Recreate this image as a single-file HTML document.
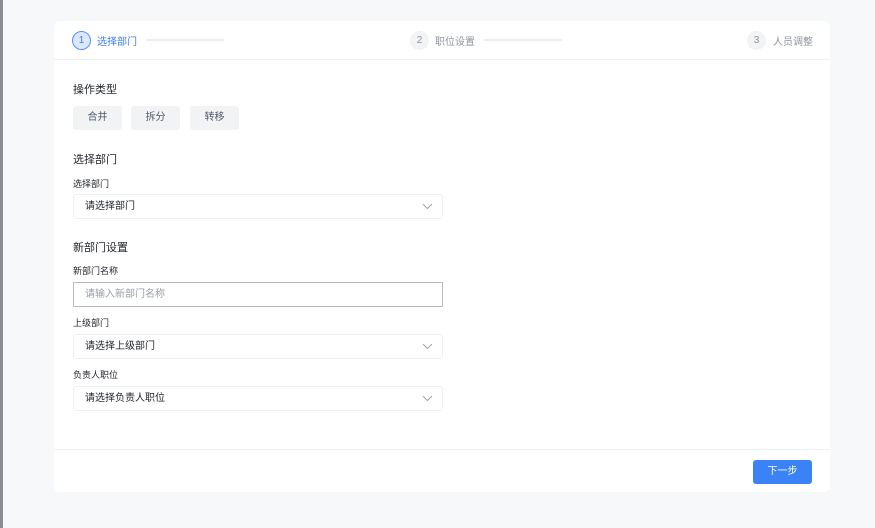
<!DOCTYPE html>
<html><head><meta charset="utf-8"><style>
*{box-sizing:border-box;margin:0;padding:0}
body{width:875px;height:528px;background:#f7f8fa;font-family:"Liberation Sans","Noto Sans CJK SC",sans-serif;position:relative;overflow:hidden;color:#1f2329}
.lstrip{position:absolute;left:0;top:0;width:3px;height:528px;background:#8a8d91}
.card{position:absolute;left:54px;top:21px;width:776px;height:471px;background:#fff;border-radius:6px}
.hdiv{position:absolute;left:0;right:0;top:38px;height:1px;background:#eff0f2}
.fdiv{position:absolute;left:0;right:0;top:428px;height:1px;background:#eff0f2}
.circ{position:absolute;width:19px;height:19px;border-radius:50%;background:#f2f3f5;color:#8f959e;font-size:10px;text-align:center;line-height:19px}
.circ.a{background:#dbe8ff;border:1px solid #5b8ff9;color:#3b7cf5;line-height:17px}
.st{position:absolute;font-size:10px;color:#8f959e;top:12px}
.st.a{color:#3b7cf5}
.ln{position:absolute;height:2px;background:#eceef1;top:18px;width:78px}
.t{position:absolute;font-size:11px;color:#1f2329}
.lb{position:absolute;font-size:9px;color:#1f2329}
.btn{position:absolute;top:85px;height:24px;background:#f2f3f5;border-radius:3px;font-size:10px;color:#4e5969;text-align:center;line-height:24px;width:49px}
.sel{position:absolute;left:19px;width:370px;height:25px;border:1px solid #eef0f2;border-radius:3px;font-size:10px;line-height:23px;padding-left:11px;color:#1f2329}
.sel svg{position:absolute;right:9px;top:8px}
.inp{position:absolute;left:19px;top:261px;width:370px;height:25px;border:1px solid #b8bbbf;font-size:10px;line-height:23px;padding-left:11px;color:#9aa0a8}
.next{position:absolute;left:699px;top:439px;width:59px;height:24px;background:#3b82f6;border-radius:3px;color:#fff;font-size:10px;text-align:center;line-height:24px}
</style></head><body>
<div class="lstrip"></div>
<div class="card">
<div class="circ a" style="left:18px;top:10px">1</div><div class="st a" style="left:43px">选择部门</div><div class="ln" style="left:92px"></div>
<div class="circ" style="left:356px;top:10px">2</div><div class="st" style="left:381px">职位设置</div><div class="ln" style="left:430px"></div>
<div class="circ" style="left:693px;top:10px">3</div><div class="st" style="left:719px">人员调整</div>
<div class="hdiv"></div>
<div class="t" style="left:19px;top:60px">操作类型</div>
<div class="btn" style="left:19px">合并</div><div class="btn" style="left:77px">拆分</div><div class="btn" style="left:136px">转移</div>
<div class="t" style="left:19px;top:130px">选择部门</div>
<div class="lb" style="left:19px;top:156px">选择部门</div>
<div class="sel" style="top:173px">请选择部门<svg width="11" height="7" viewBox="0 0 11 7"><path d="M1 1l4.5 4.5L10 1" fill="none" stroke="#a0a4aa" stroke-width="1"/></svg></div>
<div class="t" style="left:19px;top:218px">新部门设置</div>
<div class="lb" style="left:19px;top:243px">新部门名称</div>
<div class="inp">请输入新部门名称</div>
<div class="lb" style="left:19px;top:295px">上级部门</div>
<div class="sel" style="top:313px">请选择上级部门<svg width="11" height="7" viewBox="0 0 11 7"><path d="M1 1l4.5 4.5L10 1" fill="none" stroke="#a0a4aa" stroke-width="1"/></svg></div>
<div class="lb" style="left:19px;top:347px">负责人职位</div>
<div class="sel" style="top:365px">请选择负责人职位<svg width="11" height="7" viewBox="0 0 11 7"><path d="M1 1l4.5 4.5L10 1" fill="none" stroke="#a0a4aa" stroke-width="1"/></svg></div>
<div class="fdiv"></div>
<div class="next">下一步</div>
</div>
</body></html>
